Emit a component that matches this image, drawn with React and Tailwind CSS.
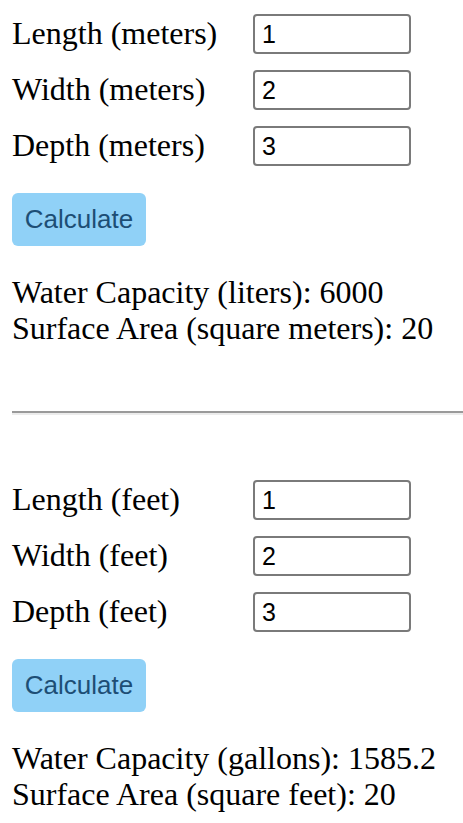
import { useState } from 'react'

const serif = { fontFamily: '"Liberation Serif", "Times New Roman", serif' }

function Calculator({ unit, volumeLabel, areaLabel, factor, digits }) {
  const [dims, setDims] = useState({ length: '1', width: '2', depth: '3' })
  const [result, setResult] = useState(null)

  const calculate = () => {
    const l = parseFloat(dims.length) || 0
    const w = parseFloat(dims.width) || 0
    const d = parseFloat(dims.depth) || 0
    const vol = l * w * d * factor
    const area = 2 * (l * w + l * d + w * d) - l * w
    setResult({ vol: digits ? vol.toFixed(digits) : String(vol), area })
  }

  // shown before clicking too, as in the picture
  const shown = result || {
    vol: digits ? (1 * 2 * 3 * factor).toFixed(digits) : String(1 * 2 * 3 * factor),
    area: 20,
  }

  return (
    <div>
      <div className="flex flex-col gap-4">
        {[
          ['length', 'Length'],
          ['width', 'Width'],
          ['depth', 'Depth'],
        ].map(([key, label]) => (
          <div key={key} className="flex items-center h-10">
            <label
              className="w-[241px] text-[32px] leading-[36px] text-black shrink-0 -mt-[3px]"
              style={serif}
            >
              {label} ({unit})
            </label>
            <input
              className="w-[158px] h-10 border-2 border-[#7a7a7a] rounded-[4px] px-[7px] text-[25px] text-black outline-none font-['Liberation_Sans',Arial,sans-serif]"
              value={dims[key]}
              onChange={(e) => setDims((p) => ({ ...p, [key]: e.target.value }))}
            />
          </div>
        ))}
      </div>

      <button
        onClick={calculate}
        className="mt-[27px] h-[53px] w-[134px] rounded-[6px] bg-[#90d1f7] text-[#1d4e75] text-[26px] font-['Liberation_Sans',Arial,sans-serif]"
      >
        Calculate
      </button>

      <div className="mt-[28px] text-[32px] leading-[36px] text-black" style={serif}>
        <div>Water Capacity ({volumeLabel}): {shown.vol}</div>
        <div>Surface Area ({areaLabel}): {shown.area}</div>
      </div>
    </div>
  )
}

export default function App() {
  return (
    <div className="pl-[12px] pt-[14px] bg-white min-h-screen overflow-hidden">
      <Calculator unit="meters" volumeLabel="liters" areaLabel="square meters" factor={1000} digits={0} />

      <hr className="mt-[65px] h-0 border-0 border-t-2 border-t-[#9a9a9a] border-b-2 border-b-[#ececec]" />

      <div className="mt-[65px]">
        <Calculator unit="feet" volumeLabel="gallons" areaLabel="square feet" factor={264.2} digits={1} />
      </div>
    </div>
  )
}
